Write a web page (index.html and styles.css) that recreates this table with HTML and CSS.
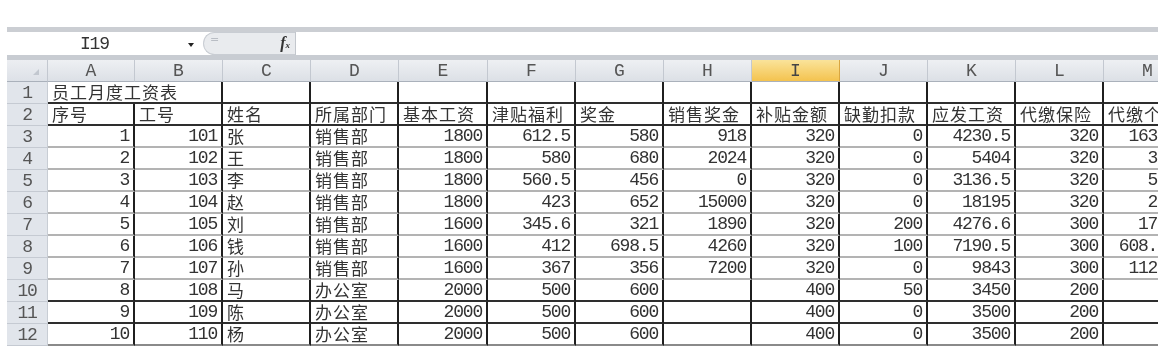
FILE: index.html
```html
<!DOCTYPE html>
<html lang="zh-CN">
<head>
<meta charset="utf-8">
<title>员工月度工资表</title>
<link rel="stylesheet" href="styles.css">
</head>
<body>
<div class="app">
  <div class="frame">
    <div class="fbar">
      <div class="namebox"><span class="ref">I19</span><span class="arrow"></span></div>
      <div class="fxzone"><span class="cap">=</span><span class="fx">f<span class="fxx">x</span></span></div>
      <div class="input"></div>
    </div>
    <div class="band"></div>
    <div class="sheet">
      <div class="row hdr">
        <div class="corner"><span class="tri"></span></div>
        <div class="ch">A</div><div class="ch">B</div><div class="ch">C</div><div class="ch">D</div><div class="ch">E</div><div class="ch">F</div><div class="ch">G</div><div class="ch">H</div><div class="ch sel">I</div><div class="ch">J</div><div class="ch">K</div><div class="ch">L</div><div class="ch">M</div>
      </div>
      <div class="row dark">
        <div class="rh">1</div>
        <div class="c t span2">员工月度工资表</div><div class="c"></div><div class="c"></div><div class="c"></div><div class="c"></div><div class="c"></div><div class="c"></div><div class="c"></div><div class="c"></div><div class="c"></div><div class="c"></div><div class="c"></div>
      </div>
      <div class="row dark">
        <div class="rh">2</div>
        <div class="c t">序号</div><div class="c t">工号</div><div class="c t">姓名</div><div class="c t">所属部门</div><div class="c t">基本工资</div><div class="c t">津贴福利</div><div class="c t">奖金</div><div class="c t">销售奖金</div><div class="c t">补贴金额</div><div class="c t">缺勤扣款</div><div class="c t">应发工资</div><div class="c t">代缴保险</div><div class="c t">代缴个税</div>
      </div>
      <div class="row">
        <div class="rh">3</div>
        <div class="c n">1</div><div class="c n">101</div><div class="c t">张</div><div class="c t">销售部</div><div class="c n">1800</div><div class="c n">612.5</div><div class="c n">580</div><div class="c n">918</div><div class="c n">320</div><div class="c n">0</div><div class="c n">4230.5</div><div class="c n">320</div><div class="c n">1632.5</div>
      </div>
      <div class="row">
        <div class="rh">4</div>
        <div class="c n">2</div><div class="c n">102</div><div class="c t">王</div><div class="c t">销售部</div><div class="c n">1800</div><div class="c n">580</div><div class="c n">680</div><div class="c n">2024</div><div class="c n">320</div><div class="c n">0</div><div class="c n">5404</div><div class="c n">320</div><div class="c n">3250</div>
      </div>
      <div class="row">
        <div class="rh">5</div>
        <div class="c n">3</div><div class="c n">103</div><div class="c t">李</div><div class="c t">销售部</div><div class="c n">1800</div><div class="c n">560.5</div><div class="c n">456</div><div class="c n">0</div><div class="c n">320</div><div class="c n">0</div><div class="c n">3136.5</div><div class="c n">320</div><div class="c n">5180</div>
      </div>
      <div class="row">
        <div class="rh">6</div>
        <div class="c n">4</div><div class="c n">104</div><div class="c t">赵</div><div class="c t">销售部</div><div class="c n">1800</div><div class="c n">423</div><div class="c n">652</div><div class="c n">15000</div><div class="c n">320</div><div class="c n">0</div><div class="c n">18195</div><div class="c n">320</div><div class="c n">2870</div>
      </div>
      <div class="row">
        <div class="rh">7</div>
        <div class="c n">5</div><div class="c n">105</div><div class="c t">刘</div><div class="c t">销售部</div><div class="c n">1600</div><div class="c n">345.6</div><div class="c n">321</div><div class="c n">1890</div><div class="c n">320</div><div class="c n">200</div><div class="c n">4276.6</div><div class="c n">300</div><div class="c n">172.5</div>
      </div>
      <div class="row">
        <div class="rh">8</div>
        <div class="c n">6</div><div class="c n">106</div><div class="c t">钱</div><div class="c t">销售部</div><div class="c n">1600</div><div class="c n">412</div><div class="c n">698.5</div><div class="c n">4260</div><div class="c n">320</div><div class="c n">100</div><div class="c n">7190.5</div><div class="c n">300</div><div class="c n">608.125</div>
      </div>
      <div class="row">
        <div class="rh">9</div>
        <div class="c n">7</div><div class="c n">107</div><div class="c t">孙</div><div class="c t">销售部</div><div class="c n">1600</div><div class="c n">367</div><div class="c n">356</div><div class="c n">7200</div><div class="c n">320</div><div class="c n">0</div><div class="c n">9843</div><div class="c n">300</div><div class="c n">1123.5</div>
      </div>
      <div class="row dark">
        <div class="rh">10</div>
        <div class="c n">8</div><div class="c n">108</div><div class="c t">马</div><div class="c t">办公室</div><div class="c n">2000</div><div class="c n">500</div><div class="c n">600</div><div class="c n"></div><div class="c n">400</div><div class="c n">50</div><div class="c n">3450</div><div class="c n">200</div><div class="c n"></div>
      </div>
      <div class="row dark">
        <div class="rh">11</div>
        <div class="c n">9</div><div class="c n">109</div><div class="c t">陈</div><div class="c t">办公室</div><div class="c n">2000</div><div class="c n">500</div><div class="c n">600</div><div class="c n"></div><div class="c n">400</div><div class="c n">0</div><div class="c n">3500</div><div class="c n">200</div><div class="c n"></div>
      </div>
      <div class="row last">
        <div class="rh">12</div>
        <div class="c n">10</div><div class="c n">110</div><div class="c t">杨</div><div class="c t">办公室</div><div class="c n">2000</div><div class="c n">500</div><div class="c n">600</div><div class="c n"></div><div class="c n">400</div><div class="c n">0</div><div class="c n">3500</div><div class="c n">200</div><div class="c n"></div>
      </div>
    </div>
  </div>
</div>
</body>
</html>
```
FILE: styles.css
```css
body {
  margin: 0;
  background: #ffffff;
}

.app {
  padding: 27px 0 0 7px;
}

.frame {
  width: 1151px;
  overflow: hidden;
  filter: blur(0.5px);
}

/* formula bar */
.fbar {
  display: flex;
  height: 23px;
  border-top: 5px solid #cbced3;
  background: #ffffff;
}

.namebox {
  width: 196px;
  display: flex;
  align-items: center;
}

.ref {
  margin-left: 73px;
  font: 18px/20px "Liberation Mono", monospace;
  letter-spacing: -1.2px;
  color: #333;
}

.arrow {
  margin-left: auto;
  margin-right: 9px;
  margin-top: 2px;
  width: 0;
  height: 0;
  border-left: 3.5px solid transparent;
  border-right: 3.5px solid transparent;
  border-top: 4px solid #222;
}

.fxzone {
  width: 92px;
  box-sizing: border-box;
  display: flex;
  align-items: center;
  background: #e9ebee;
  border: 1px solid #c9cdd3;
  border-right: none;
  border-radius: 12px 0 0 12px;
}

.cap {
  margin-left: 6px;
  font: 11px/12px "DejaVu Sans", sans-serif;
  color: #b9bdc4;
  margin-top: -8px;
}

.fx {
  margin-left: auto;
  margin-right: 5px;
  font: italic bold 16px/18px "Liberation Serif", serif;
  color: #333;
}

.fxx {
  font-size: 9px;
}

.input {
  flex: 1;
  border-left: 1px solid #c3c7cd;
  background: #ffffff;
}

.band {
  height: 5px;
  background: #c8ccd2;
}

/* sheet grid */
.sheet {
  display: grid;
  grid-template-columns: 41px 87px repeat(3, 88px) 89px repeat(8, 88px);
  grid-auto-rows: 22px;
  width: max-content;
}

.row {
  display: contents;
}

.corner,
.ch,
.rh,
.c {
  box-sizing: border-box;
  display: flex;
  white-space: nowrap;
}

.corner {
  background: linear-gradient(#eceef2, #dde1e7);
  border-right: 1px solid #c3c8d0;
  border-bottom: 1px solid #aab1bb;
  justify-content: flex-end;
  align-items: flex-end;
}

.tri {
  width: 0;
  height: 0;
  margin: 0 8px 6px 0;
  border-left: 6px solid transparent;
  border-bottom: 6px solid #c2c7cf;
}

.ch {
  background: linear-gradient(#eef0f3, #dce0e6);
  border-right: 1px solid #c3c8d0;
  border-bottom: 1px solid #aab1bb;
  justify-content: center;
  align-items: center;
  font: 18px/18px "Liberation Mono", monospace;
  color: #555;
}

.ch.sel {
  background: linear-gradient(#fae39a, #f4c34f);
  border-right-color: #d9a640;
  color: #444;
}

.rh {
  background: #e1e5eb;
  border-bottom: 1px solid #c5cad2;
  border-right: 1px solid #c8cdd4;
  justify-content: center;
  align-items: center;
  font: 18px/18px "Liberation Mono", monospace;
  letter-spacing: -1.2px;
  color: #555;
}

.c {
  border-right: 2px solid #1f1f1f;
  border-bottom: 2px solid #b3b3b3;
  padding: 0 4px 1px 4px;
  align-items: flex-end;
  color: #2a2a2a;
}

.row.dark .c {
  border-bottom-color: #2e2e2e;
}

.row.last .c {
  border-bottom-color: #8a8a8a;
}

.c.t {
  font: 17px/19px "Noto Sans CJK SC", sans-serif;
  letter-spacing: 1px;
  justify-content: flex-start;
  color: #333;
}

.c.n {
  font: 18px/18px "Liberation Mono", monospace;
  letter-spacing: -1.2px;
  justify-content: flex-end;
  color: #333;
}

.c.span2 {
  grid-column: span 2;
}
```
